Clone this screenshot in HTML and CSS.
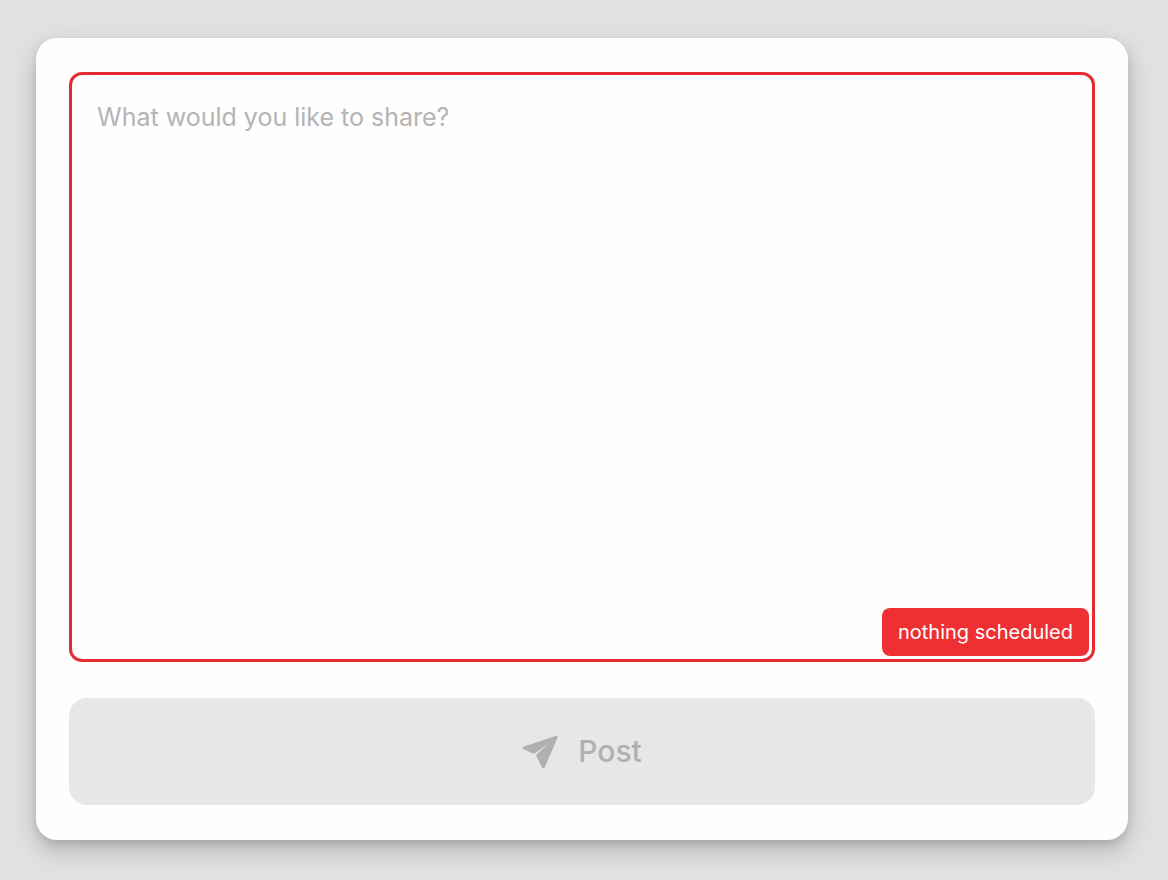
FILE: index.html
```html
<!DOCTYPE html>
<html lang="en">
<head>
<meta charset="utf-8">
<meta name="viewport" content="width=device-width, initial-scale=1">
<title>Share a post</title>
<link rel="stylesheet" href="styles.css">
</head>
<body>
<main class="page">
  <form class="composer">
    <div class="field">
      <textarea class="field-input" aria-label="Post text" placeholder="What would you like to share?"></textarea>
      <span class="badge">nothing scheduled</span>
    </div>
    <button class="post-button" type="submit" disabled>
      <svg class="post-icon" viewBox="0 0 36 34" aria-hidden="true">
        <path d="M2 11.4 33.4 .9Q36.3 .2 35.4 3L22.9 32Q21.3 34.8 19.8 32L14.3 21.2Q13.9 20.3 14.6 19.5L26.4 8.8 12.9 18.2Q12 18.8 11.1 18.4L1.6 14.3Q-.6 12.6 2 11.4Z"/>
      </svg>
      <span>Post</span>
    </button>
  </form>
</main>
</body>
</html>
```
FILE: styles.css
```css
* {
  box-sizing: border-box;
}

body {
  margin: 0;
  background: #e1e1e1;
  font-family: Inter, "Liberation Sans", sans-serif;
}

.page {
  display: flex;
  min-height: 100vh;
  padding: 38px 40px 40px 36px;
}

.composer {
  flex: 1;
  display: flex;
  flex-direction: column;
  gap: 36px;
  padding: 34px 33px 35px;
  border-radius: 21px;
  background: #fefefe;
  box-shadow: 0 10px 24px rgba(0, 0, 0, 0.2), 0 4px 8px rgba(0, 0, 0, 0.1);
}

.field {
  position: relative;
  flex: 1;
  display: flex;
}

.field-input {
  flex: 1;
  padding: 26px 25px;
  border: 3px solid #e62b2f;
  border-radius: 13px;
  outline: none;
  resize: none;
  background: transparent;
  color: #333;
  font: 400 25px/32px Inter, "Liberation Sans", sans-serif;
}

.field-input::placeholder {
  color: #b4b4b4;
  opacity: 1;
}

.badge {
  position: absolute;
  right: 6px;
  bottom: 6px;
  padding: 8px 16px;
  border-radius: 8px;
  background: #ee3033;
  color: #fff;
  font-size: 20px;
  line-height: 32px;
}

.post-button {
  display: flex;
  align-items: center;
  justify-content: center;
  gap: 20px;
  padding: 34px;
  border: 0;
  border-radius: 18px;
  background: #e7e7e7;
  color: #b0b0b0;
  font: 500 30px/39px Inter, "Liberation Sans", sans-serif;
}

.post-icon {
  width: 36px;
  height: 34px;
  fill: currentColor;
}
```
